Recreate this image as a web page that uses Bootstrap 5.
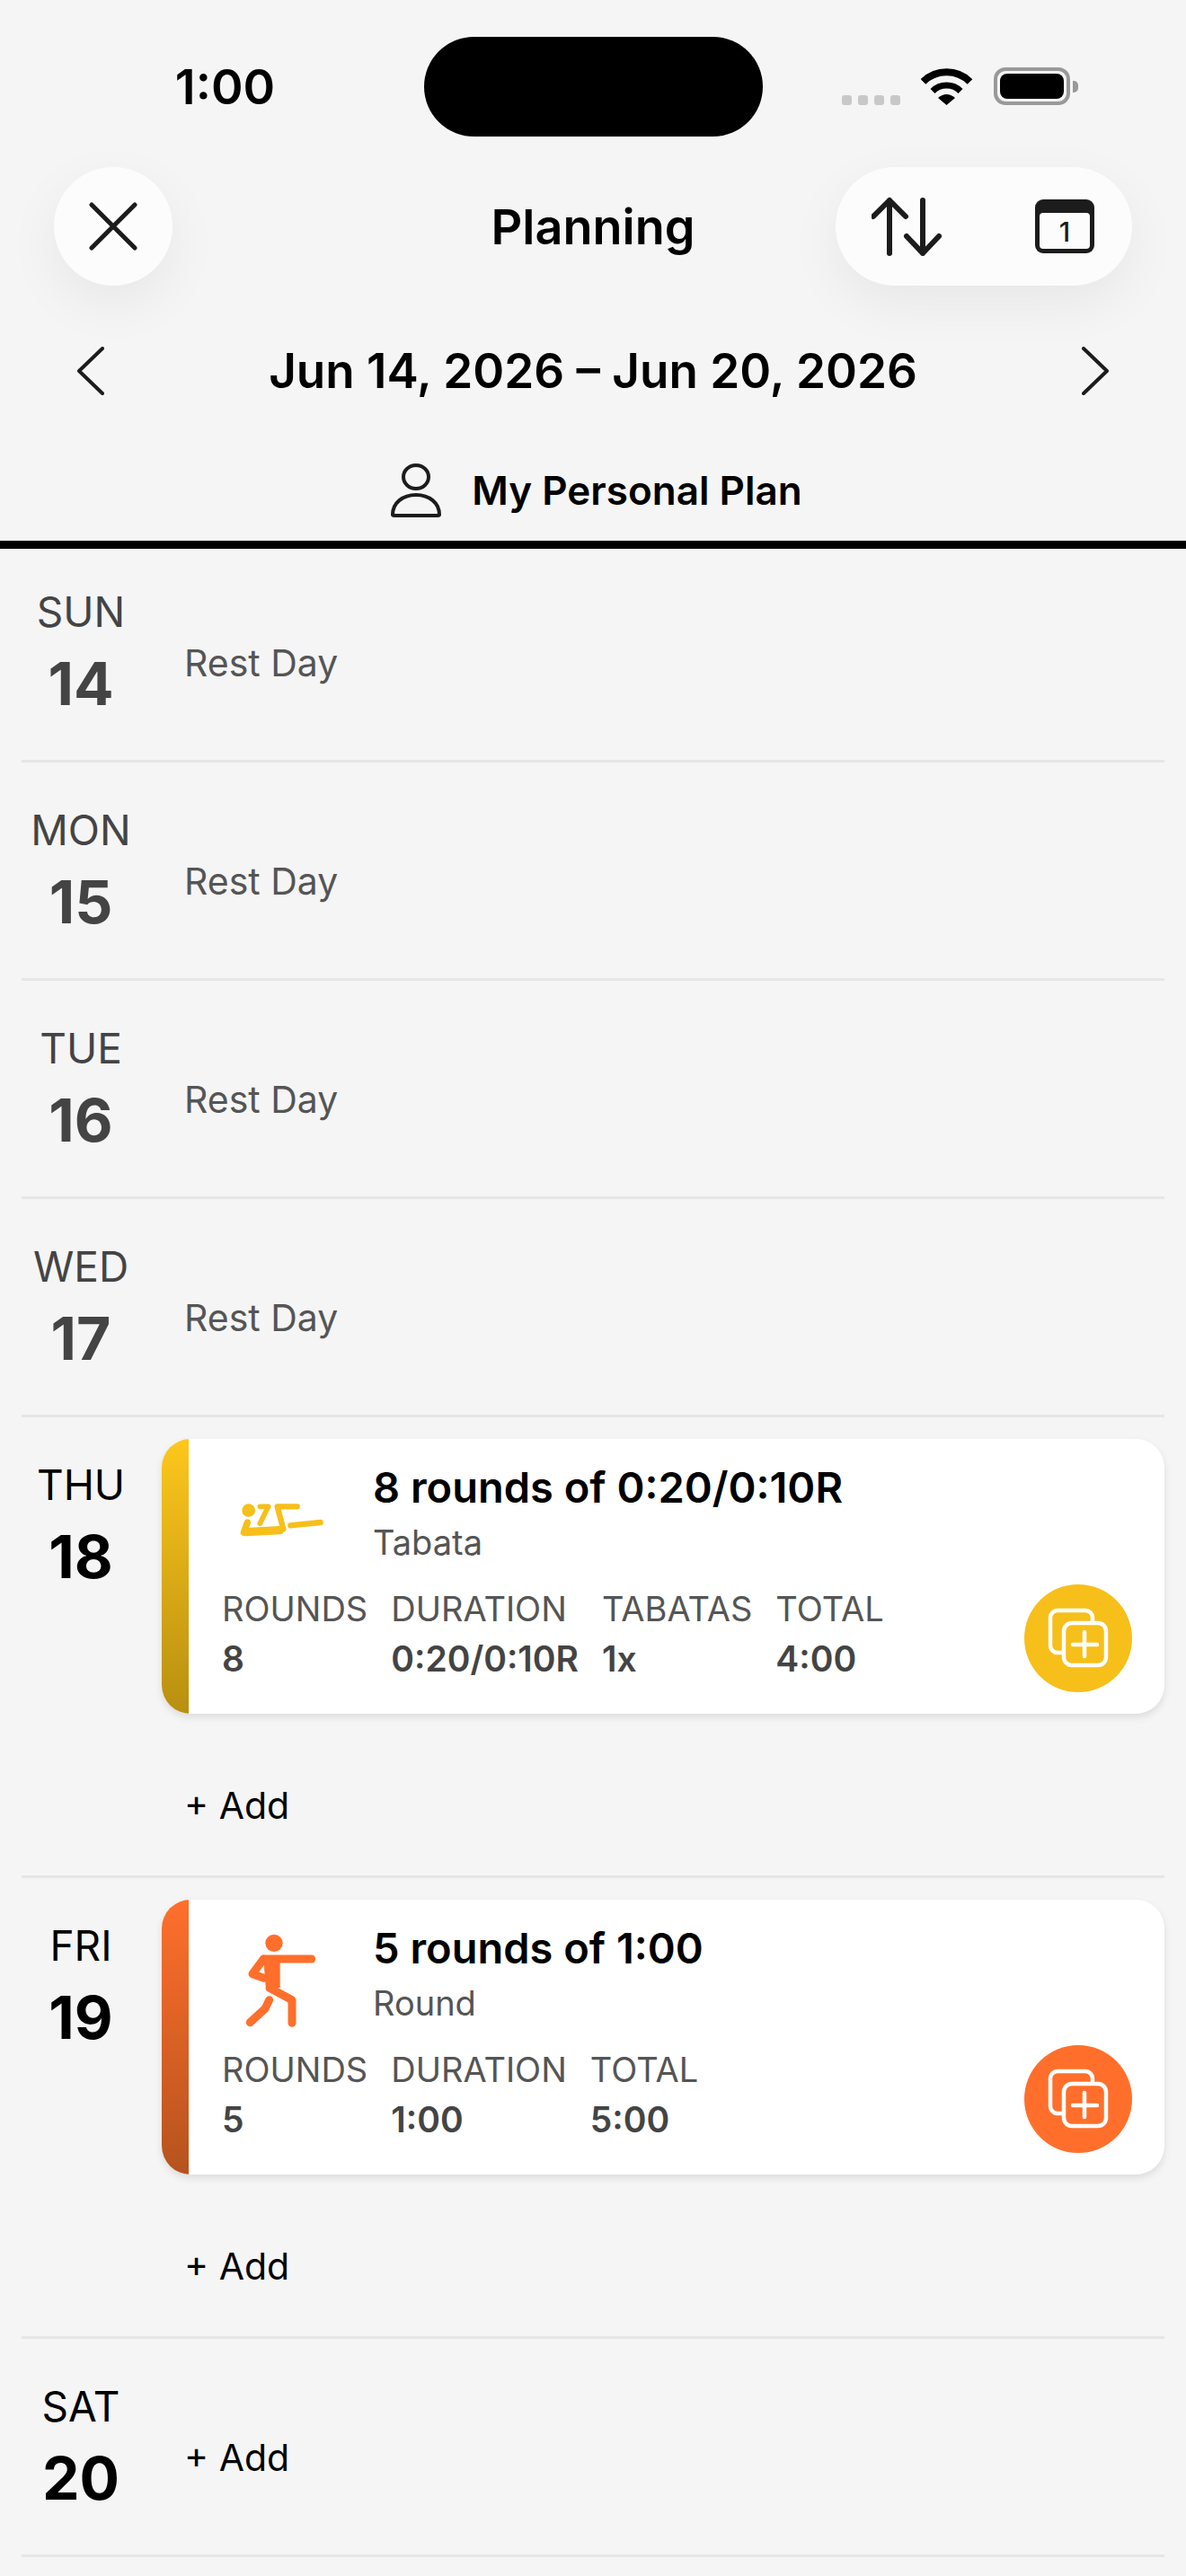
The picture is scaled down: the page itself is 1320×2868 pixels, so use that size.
<!DOCTYPE html>
<html lang="en">
<head>
    <meta charset="UTF-8">
    <meta name="viewport" content="width=device-width, initial-scale=1.0">
    <link href="https://cdn.jsdelivr.net/npm/bootstrap@5.3.3/dist/css/bootstrap.min.css" rel="stylesheet">
    <title>Planning</title>
    <style>
        body { background: #f5f5f5; font-family: Inter, "Noto Sans", sans-serif; color: #000; }
        .phone { width: 1320px; height: 2868px; overflow: hidden; background: #f5f5f5; }
        .status-bar { height: 186px; padding-top: 41px; }
        .status-time { width: 471px; height: 111px; padding-left: 30px; font-size: 54px; font-weight: 600; line-height: 112px; text-align: center; }
        .island { width: 377px; height: 111px; background: #000; border-radius: 56px; margin-left: 1px; }
        .status-icons { width: 471px; height: 111px; padding: 34px 0 0 88px; gap: 23px; }
        .sig-dots { gap: 7px; padding-top: 31px; }
        .sig-dots span { width: 11px; height: 11px; border-radius: 3px; background: #c8c8c8; }
        .batt { width: 85px; height: 42px; border: 4px solid #999; border-radius: 13px; padding: 3px; position: relative; }
        .batt i { display: block; height: 100%; background: #000; border-radius: 8px; }
        .batt b { position: absolute; right: -13px; top: 11px; width: 6px; height: 13px; background: #999; border-radius: 0 5px 5px 0; }
        .top-bar { height: 132px; padding: 0 60px; }
        .top-side { width: 330px; }
        .glass { background: #fcfcfc; height: 132px; box-shadow: 0 20px 60px rgba(0,0,0,.06); }
        .glass-round { width: 132px; border-radius: 50%; }
        .glass-pill { width: 330px; border-radius: 66px; padding: 0 42px 0 40px; }
        .page-title { font-size: 54px; font-weight: 600; line-height: 1; margin: 0; padding-top: 2px; }
        .date-bar { height: 190px; padding: 0 86px; font-size: 53px; font-weight: 600; }
        .date-text { padding-top: 2px; }
        .plan-bar { height: 94px; padding-bottom: 18px; padding-left: 8px; gap: 34px; font-size: 44px; font-weight: 600; }
        .plan-line { height: 9px; background: #000; }
        .day-list { padding: 0 24px; margin-top: -5px; }
        .day-row { border-bottom: 3px solid #e6e6e6; min-height: 243px; }
        .day-col { width: 156px; flex: none; text-align: center; padding: 40px 24px 0 0; color: #444; }
        .day-col.soon { color: #000; }
        .day-name { font-size: 46px; line-height: 70px; }
        .day-num { font-size: 66px; font-weight: 700; line-height: 90px; }
        .rest-text { font-size: 41px; line-height: 50px; color: #555; margin: 107px 0 0 25px; }
        .add-link { display: block; font-size: 41px; line-height: 50px; color: #000; margin-left: 25px; text-decoration: none; }
        .add-solo { margin-top: 107px; }
        .card-cell { padding-top: 24px; }
        .workout { width: 1116px; height: 306px; border: 0; border-radius: 32px; box-shadow: 0 4px 8px rgba(0,0,0,.1); overflow: hidden; }
        .stripe { width: 30px; flex: none; }
        .stripe-yellow { background: linear-gradient(#fdc71c, #b88f10); }
        .stripe-orange { background: linear-gradient(#ff6f2b, #b5531e); }
        .workout-body { padding: 0 0 0 37px; }
        .work-head { height: 162px; padding-top: 25px; }
        .work-icon { width: 168px; flex: none; }
        .icon-tabata { margin: 42px 0 0 13px; display: block; }
        .icon-round { margin: 5px 0 0 18px; display: block; }
        .work-title { font-size: 47px; font-weight: 600; line-height: 58px; }
        .work-sub { font-size: 38px; color: #555; line-height: 64px; }
        .stat-row { font-size: 38px; line-height: 55px; color: #555; column-gap: 26px; }
        .stat-cell b { display: block; font-size: 39px; font-weight: 600; color: #444; }
        .fab { width: 120px; height: 120px; border-radius: 50%; position: absolute; right: 36px; bottom: 24px; }
        .fab-yellow { background: #f7bf1a; }
        .fab-orange { background: #ff6f2b; }
        .add-row { height: 180px; padding-top: 77px; }
    </style>
</head>
<body>
    <div class="phone">
        <div class="status-bar d-flex">
            <div class="status-time">1:00</div>
            <div class="island"></div>
            <div class="status-icons d-flex align-items-start">
                <div class="sig-dots d-flex"><span></span><span></span><span></span><span></span></div>
                <svg width="58" height="42" viewBox="0 0 58 42">
                    <path d="M2.5 16a37 37 0 0 1 52 0" fill="none" stroke="#000" stroke-width="8"/>
                    <path d="M13 26.5a22 22 0 0 1 31 0" fill="none" stroke="#000" stroke-width="7"/>
                    <path d="M28.5 42L19 34Q28.5 26 38 34Z" fill="#000"/>
                </svg>
                <div class="batt"><i></i><b></b></div>
            </div>
        </div>

        <div class="top-bar d-flex align-items-center justify-content-between">
            <div class="top-side">
                <div class="glass glass-round d-flex align-items-center justify-content-center">
                    <svg width="54" height="54" viewBox="0 0 54 54"><path d="M3 3L51 51M51 3L3 51" stroke="#1c1c1c" stroke-width="5" stroke-linecap="round"/></svg>
                </div>
            </div>
            <h1 class="page-title">Planning</h1>
            <div class="top-side">
                <div class="glass glass-pill d-flex align-items-center justify-content-between">
                    <svg width="80" height="66" viewBox="0 0 80 66">
                        <g fill="none" stroke="#1c1c1c" stroke-width="6" stroke-linecap="round" stroke-linejoin="round">
                            <path d="M20 4V63M2 22L20 4L38 22"/>
                            <path d="M57 4V63M39 44L57 63L75 44"/>
                        </g>
                    </svg>
                    <svg width="66" height="60" viewBox="0 0 66 60">
                        <rect x="0" y="0" width="66" height="60" rx="9" fill="#1c1c1c"/>
                        <rect x="5" y="15" width="56" height="40" rx="4" fill="#fcfcfc"/>
                        <text x="33" y="47" text-anchor="middle" font-family="Inter" font-weight="500" font-size="30" fill="#1c1c1c">1</text>
                    </svg>
                </div>
            </div>
        </div>

        <div class="date-bar d-flex align-items-center justify-content-between">
            <svg width="30" height="54" viewBox="0 0 30 54"><path d="M28 2L2 27L28 52" fill="none" stroke="#1c1c1c" stroke-width="4" stroke-linecap="round" stroke-linejoin="round"/></svg>
            <span class="date-text">Jun 14, 2026 – Jun 20, 2026</span>
            <svg width="30" height="54" viewBox="0 0 30 54"><path d="M2 2L28 27L2 52" fill="none" stroke="#1c1c1c" stroke-width="4" stroke-linecap="round" stroke-linejoin="round"/></svg>
        </div>

        <div class="plan-bar d-flex align-items-center justify-content-center">
            <svg width="56" height="60" viewBox="0 0 56 60">
                <ellipse cx="28" cy="15" rx="14" ry="13" fill="none" stroke="#1c1c1c" stroke-width="4"/>
                <path d="M2 57C2 44 13 35 28 35S54 44 54 57Q54 58 52 58H4Q2 58 2 57Z" fill="none" stroke="#1c1c1c" stroke-width="4"/>
            </svg>
            <span>My Personal Plan</span>
        </div>
        <div class="plan-line"></div>

        <div class="day-list">
            <div class="day-row d-flex">
                <div class="day-col"><div class="day-name">SUN</div><div class="day-num">14</div></div>
                <div class="rest-text">Rest Day</div>
            </div>
            <div class="day-row d-flex">
                <div class="day-col"><div class="day-name">MON</div><div class="day-num">15</div></div>
                <div class="rest-text">Rest Day</div>
            </div>
            <div class="day-row d-flex">
                <div class="day-col"><div class="day-name">TUE</div><div class="day-num">16</div></div>
                <div class="rest-text">Rest Day</div>
            </div>
            <div class="day-row d-flex">
                <div class="day-col"><div class="day-name">WED</div><div class="day-num">17</div></div>
                <div class="rest-text">Rest Day</div>
            </div>

            <div class="day-row d-flex">
                <div class="day-col soon"><div class="day-name">THU</div><div class="day-num">18</div></div>
                <div class="card-cell">
                    <div class="card workout flex-row position-relative">
                        <div class="stripe stripe-yellow"></div>
                        <div class="workout-body flex-grow-1">
                            <div class="work-head d-flex">
                                <div class="work-icon">
                                    <svg class="icon-tabata" width="106" height="44" viewBox="0 0 318 132">
                                        <circle cx="50" cy="38" r="22" fill="#f7bf1a"/>
                                        <g fill="none" stroke="#f7bf1a" stroke-linecap="round" stroke-linejoin="round">
                                            <path d="M34 112L46 78" stroke-width="22"/>
                                            <path d="M42 110L155 104" stroke-width="28"/>
                                            <path d="M88 25H116L88 82" stroke-width="17"/>
                                            <path d="M212 25H146L166 100" stroke-width="19"/>
                                            <path d="M190 88L290 78" stroke-width="19"/>
                                        </g>
                                    </svg>
                                </div>
                                <div>
                                    <div class="work-title">8 rounds of 0:20/0:10R</div>
                                    <div class="work-sub">Tabata</div>
                                </div>
                            </div>
                            <div class="stat-row d-flex">
                                <div class="stat-cell">ROUNDS<b>8</b></div>
                                <div class="stat-cell">DURATION<b>0:20/0:10R</b></div>
                                <div class="stat-cell">TABATAS<b>1x</b></div>
                                <div class="stat-cell">TOTAL<b>4:00</b></div>
                            </div>
                        </div>
                        <div class="fab fab-yellow d-flex align-items-center justify-content-center">
                            <svg width="68" height="68" viewBox="0 0 68 68">
                                <g fill="none" stroke="#fff" stroke-width="4.5" stroke-linejoin="round">
                                    <path d="M16 50H11A8 8 0 0 1 3 42V11A8 8 0 0 1 11 3H42A8 8 0 0 1 50 11V17"/>
                                    <rect x="18" y="17" width="47" height="47" rx="9"/>
                                    <path d="M41 27V54M28 41H55" stroke-linecap="round"/>
                                </g>
                            </svg>
                        </div>
                    </div>
                    <div class="add-row"><a href="#" class="add-link">+ Add</a></div>
                </div>
            </div>

            <div class="day-row d-flex">
                <div class="day-col soon"><div class="day-name">FRI</div><div class="day-num">19</div></div>
                <div class="card-cell">
                    <div class="card workout flex-row position-relative">
                        <div class="stripe stripe-orange"></div>
                        <div class="workout-body flex-grow-1">
                            <div class="work-head d-flex">
                                <div class="work-icon">
                                    <svg class="icon-round" width="90" height="120" viewBox="0 0 270 360">
                                        <circle cx="120" cy="55" r="29" fill="#ff6f2b"/>
                                        <path d="M84 97H140V205L92 200Z" fill="#ff6f2b"/>
                                        <g fill="none" stroke="#ff6f2b" stroke-width="27" stroke-linecap="round" stroke-linejoin="round">
                                            <path d="M88 108H245"/>
                                            <path d="M85 108L48 158L86 172"/>
                                            <path d="M105 205L180 245V322"/>
                                            <path d="M104 245L90 274L40 320"/>
                                        </g>
                                    </svg>
                                </div>
                                <div>
                                    <div class="work-title">5 rounds of 1:00</div>
                                    <div class="work-sub">Round</div>
                                </div>
                            </div>
                            <div class="stat-row d-flex">
                                <div class="stat-cell">ROUNDS<b>5</b></div>
                                <div class="stat-cell">DURATION<b>1:00</b></div>
                                <div class="stat-cell">TOTAL<b>5:00</b></div>
                            </div>
                        </div>
                        <div class="fab fab-orange d-flex align-items-center justify-content-center">
                            <svg width="68" height="68" viewBox="0 0 68 68">
                                <g fill="none" stroke="#fff" stroke-width="4.5" stroke-linejoin="round">
                                    <path d="M16 50H11A8 8 0 0 1 3 42V11A8 8 0 0 1 11 3H42A8 8 0 0 1 50 11V17"/>
                                    <rect x="18" y="17" width="47" height="47" rx="9"/>
                                    <path d="M41 27V54M28 41H55" stroke-linecap="round"/>
                                </g>
                            </svg>
                        </div>
                    </div>
                    <div class="add-row"><a href="#" class="add-link">+ Add</a></div>
                </div>
            </div>

            <div class="day-row d-flex">
                <div class="day-col soon"><div class="day-name">SAT</div><div class="day-num">20</div></div>
                <div class="add-solo"><a href="#" class="add-link">+ Add</a></div>
            </div>
        </div>
    </div>
    <script src="https://cdn.jsdelivr.net/npm/bootstrap@5.3.3/dist/js/bootstrap.bundle.min.js"></script>
</body>
</html>
